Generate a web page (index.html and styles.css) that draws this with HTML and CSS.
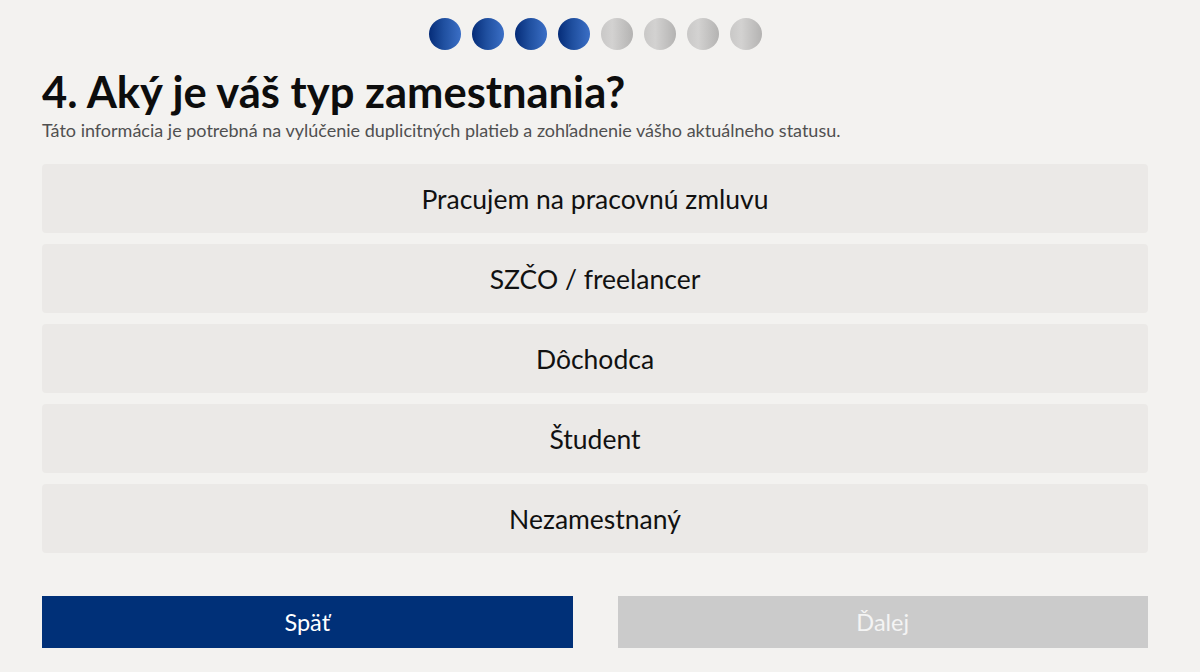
FILE: index.html
```
<!DOCTYPE html>
<html lang="sk">
<head>
<meta charset="utf-8">
<title>Typ zamestnania</title>
<link rel="stylesheet" href="styles.css">
</head>
<body>
<main class="page">
  <div class="progress">
    <span class="dot done"></span>
    <span class="dot done"></span>
    <span class="dot done"></span>
    <span class="dot done"></span>
    <span class="dot"></span>
    <span class="dot"></span>
    <span class="dot"></span>
    <span class="dot"></span>
  </div>
  <h1 class="title">4. Aký je váš typ zamestnania?</h1>
  <p class="subtitle">Táto informácia je potrebná na vylúčenie duplicitných platieb a zohľadnenie vášho aktuálneho statusu.</p>
  <div class="options">
    <button class="option">Pracujem na pracovnú zmluvu</button>
    <button class="option">SZČO / freelancer</button>
    <button class="option">Dôchodca</button>
    <button class="option">Študent</button>
    <button class="option">Nezamestnaný</button>
  </div>
  <div class="nav">
    <button class="btn btn-back">Späť</button>
    <button class="btn btn-next" disabled>Ďalej</button>
  </div>
</main>
</body>
</html>
```
FILE: styles.css
```
html, body {
  margin: 0;
  padding: 0;
  background: #f3f2f0;
}
body {
  font-family: Lato, "Noto Sans", "Liberation Sans", sans-serif;
  color: #111;
}
.page {
  width: 1106px;
  margin-left: 42px;
  padding-top: 18px;
}
.progress {
  display: flex;
  justify-content: center;
  gap: 11px;
  height: 32px;
}
.dot {
  width: 32px;
  height: 32px;
  border-radius: 50%;
  background: linear-gradient(90deg, #c9c8c7 0%, #d3d2d1 35%, #b4b3b2 100%);
}
.dot.done {
  background: linear-gradient(90deg, #052c78 0%, #1f4f9f 45%, #3b6fc6 100%);
}
.title {
  margin: 17px 0 0;
  font-size: 43.5px;
  line-height: 48px;
  font-weight: 700;
  color: #0d0d0d;
}
.subtitle {
  margin: 4px 0 0;
  font-size: 18px;
  line-height: 22px;
  color: #505050;
}
.options {
  display: flex;
  flex-direction: column;
  gap: 11px;
  margin-top: 23px;
}
.option {
  height: 69px;
  border: none;
  border-radius: 4px;
  background: #ebe9e7;
  font-family: inherit;
  font-size: 26.5px;
  color: #111;
  cursor: pointer;
}
.nav {
  display: flex;
  gap: 45px;
  margin-top: 43px;
}
.btn {
  flex: 1;
  height: 52px;
  border: none;
  font-family: inherit;
  font-size: 23.5px;
  color: #fff;
}
.btn-back {
  background: #003078;
}
.btn-next {
  background: #cbcbcb;
  color: #f4f4f4;
}
```
